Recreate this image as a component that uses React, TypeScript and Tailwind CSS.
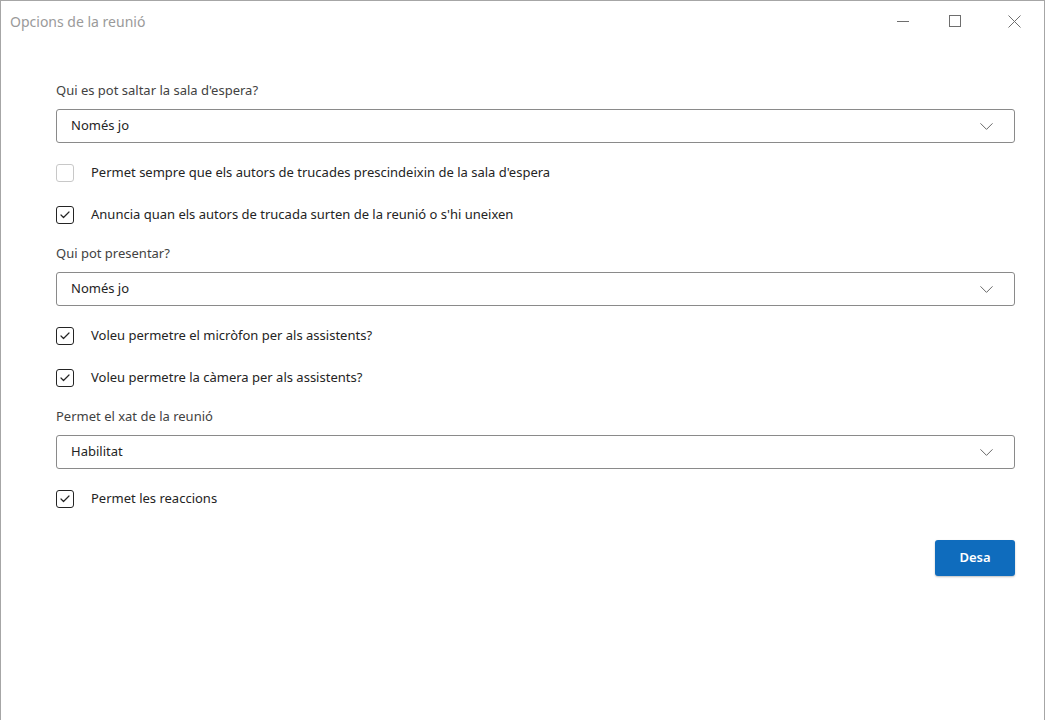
import { Check, ChevronDown } from 'lucide-react';

type Item =
    | { kind: 'label'; text: string }
    | { kind: 'select'; value: string }
    | { kind: 'check'; text: string; checked: boolean };

const items: Item[] = [
    { kind: 'label', text: "Qui es pot saltar la sala d'espera?" },
    { kind: 'select', value: 'Només jo' },
    { kind: 'check', text: "Permet sempre que els autors de trucades prescindeixin de la sala d'espera", checked: false },
    { kind: 'check', text: "Anuncia quan els autors de trucada surten de la reunió o s'hi uneixen", checked: true },
    { kind: 'label', text: 'Qui pot presentar?' },
    { kind: 'select', value: 'Només jo' },
    { kind: 'check', text: 'Voleu permetre el micròfon per als assistents?', checked: true },
    { kind: 'check', text: 'Voleu permetre la càmera per als assistents?', checked: true },
    { kind: 'label', text: 'Permet el xat de la reunió' },
    { kind: 'select', value: 'Habilitat' },
    { kind: 'check', text: 'Permet les reaccions', checked: true },
];

const Label = ({ text }: { text: string }) => (
    <div className="mt-[15px] mb-[9px] h-5 leading-5 text-[#424242] first:mt-0">{text}</div>
);

const Select = ({ value }: { value: string }) => (
    <div className="mb-px flex h-[34px] items-center justify-between rounded-[3px] border border-[#8a8a8a] pl-[14px] pr-[16px] text-[#242424]">
        <span>{value}</span>
        <ChevronDown size={23} strokeWidth={1} className="text-[#616161]" />
    </div>
);

const CheckRow = ({ text, checked }: { text: string; checked: boolean }) => (
    <div className="mt-[19px] mb-[3px] flex h-5 items-center">
        <div
            className={
                checked
                    ? 'flex h-[18px] w-[18px] items-center justify-center rounded-[3px] border border-[#242424]'
                    : 'flex h-[18px] w-[18px] items-center justify-center rounded-[3px] border border-[#c8c8c8]'
            }
        >
            {checked && <Check size={12} strokeWidth={2.4} className="text-[#242424]" />}
        </div>
        <span className="ml-[17px] text-[#242424]">{text}</span>
    </div>
);

export default function App() {
    return (
        <div
            className="h-[720px] w-[1045px] overflow-hidden border-x border-t border-[#a6a6a6] bg-white text-[13px]"
            style={{ fontFamily: '"Noto Sans", "Open Sans", sans-serif' }}
        >
            {/* Title bar */}
            <div className="flex h-[40px] items-center justify-between">
                <span className="ml-[9px] text-[14px] text-[#9a9a9a]">Opcions de la reunió</span>
                <div className="mr-[23px] flex items-center text-[#6e6e6e]">
                    <svg width="12" height="12" viewBox="0 0 12 12"><path d="M0 6.5h12" stroke="currentColor" strokeWidth="1" /></svg>
                    <svg className="ml-[40px]" width="12" height="12" viewBox="0 0 12 12"><rect x="0.5" y="0.5" width="11" height="11" fill="none" stroke="currentColor" strokeWidth="1" /></svg>
                    <svg className="ml-[47px]" width="13" height="13" viewBox="0 0 13 13"><path d="M0.5 0.5l12 12M12.5 0.5l-12 12" stroke="currentColor" strokeWidth="1" /></svg>
                </div>
            </div>

            <div className="flex flex-col pl-[55px] pr-[29px] pt-[39px]">
                {items.map((item, i) => {
                    if (item.kind === 'label') return <Label key={i} text={item.text} />;
                    if (item.kind === 'select') return <Select key={i} value={item.value} />;
                    return <CheckRow key={i} text={item.text} checked={item.checked} />;
                })}

                <div className="mt-[28px] flex justify-end">
                    <button className="h-[36px] w-[80px] rounded-[3px] bg-[#0f6cbd] font-semibold text-white shadow-[0_1px_2px_rgba(0,0,0,0.25)]">
                        Desa
                    </button>
                </div>
            </div>
        </div>
    );
}
